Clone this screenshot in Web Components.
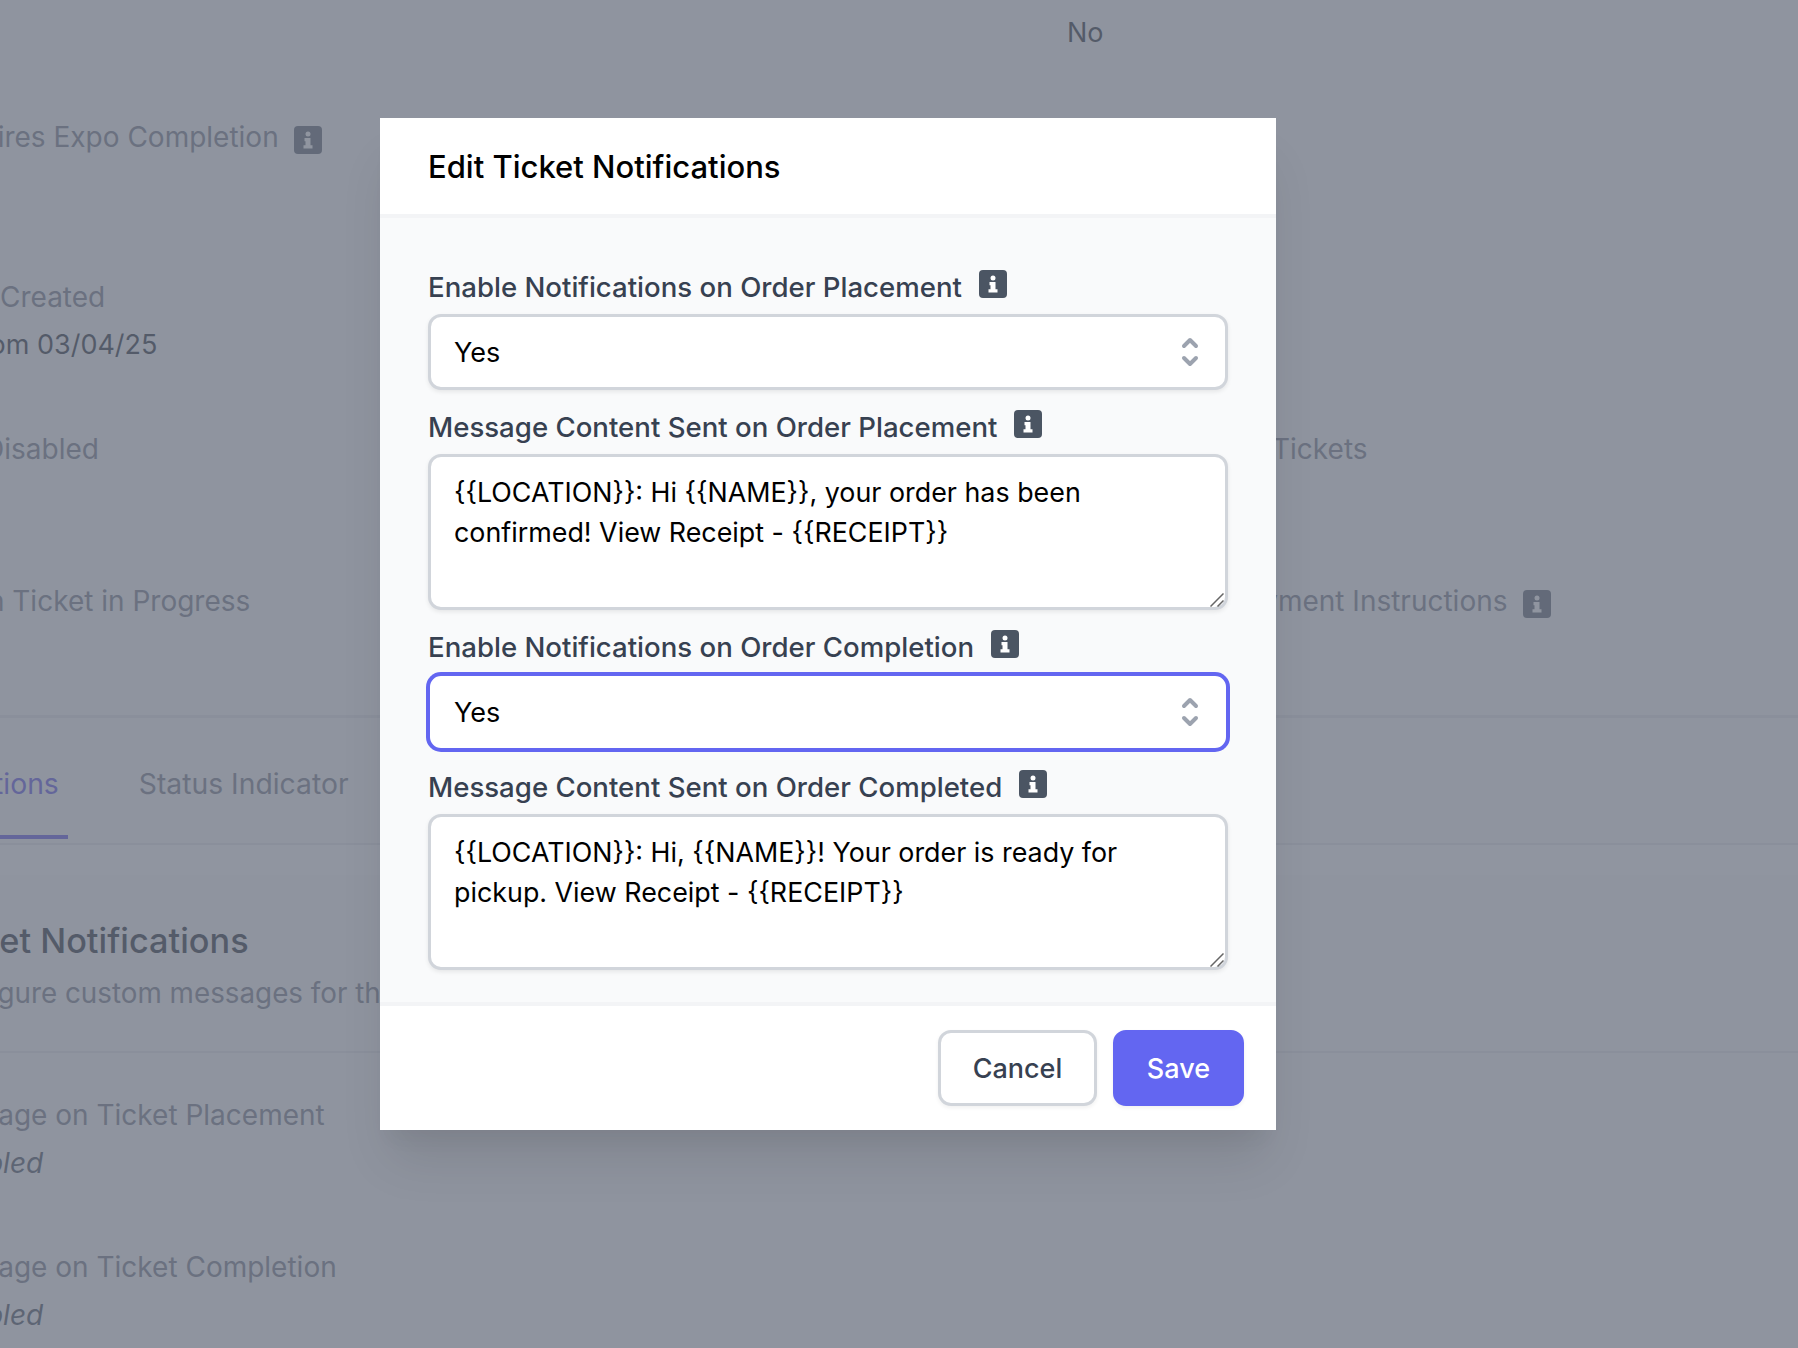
<!DOCTYPE html>
<html lang="en">
<head>
<meta charset="utf-8">
<title>Edit Ticket Notifications</title>
<style>
  html, body { margin: 0; height: 1348px; overflow: hidden; background: #f9fafb; }
  body { font-family: Inter, "Liberation Sans", sans-serif; position: relative; }
</style>
</head>
<body>

<settings-page>
  <settings-field slot="details" style="grid-column:2;" value="No"></settings-field>
  <settings-field slot="details" style="grid-column:1;grid-row:2;margin-left:-70px" label="Requires Expo Completion" info></settings-field>
  <settings-field slot="details" style="grid-column:1;grid-row:3;margin-left:-69px" label="Date Created" value="Custom 03/04/25"></settings-field>
  <settings-field slot="details" style="grid-column:1;grid-row:4;margin-left:-16px" label="Disabled"></settings-field>
  <settings-field slot="details" style="grid-column:2;grid-row:4;margin-left:205px" label="Tickets"></settings-field>
  <settings-field slot="details" style="grid-column:1;grid-row:5;margin-left:-67px" label="Open Ticket in Progress"></settings-field>
  <settings-field slot="details" style="grid-column:2;grid-row:5;margin-left:162px" label="Payment Instructions" info></settings-field>

  <settings-field slot="messages" label="Message on Ticket Placement" value="Disabled" italic></settings-field>
  <settings-field slot="messages" label="Message on Ticket Completion" value="Disabled" italic></settings-field>
</settings-page>

<modal-overlay>
  <edit-modal heading="Edit Ticket Notifications">
    <form-field label="Enable Notifications on Order Placement"><select-box>Yes</select-box></form-field>
    <form-field label="Message Content Sent on Order Placement"><text-box>{{LOCATION}}: Hi {{NAME}}, your order has been confirmed! View Receipt - {{RECEIPT}}</text-box></form-field>
    <form-field label="Enable Notifications on Order Completion"><select-box focused>Yes</select-box></form-field>
    <form-field label="Message Content Sent on Order Completed"><text-box>{{LOCATION}}: Hi, {{NAME}}! Your order is ready for pickup. View Receipt - {{RECEIPT}}</text-box></form-field>

    <action-button slot="actions">Cancel</action-button>
    <action-button slot="actions" primary>Save</action-button>
  </edit-modal>
</modal-overlay>

<script>
  // small square "i" used next to labels
  class InfoIcon extends HTMLElement {
    constructor() {
      super();
      const shadow = this.attachShadow({mode: 'open'});
      shadow.innerHTML = `
        <style>
          :host { display: inline-block; width: 28px; height: 28px; flex: none; }
          svg { display: block; }
        </style>
        <svg width="28" height="28" viewBox="0 0 28 28">
          <rect width="28" height="28" rx="4" fill="#4b5563"/>
          <circle cx="14" cy="8" r="2.5" fill="#fff"/>
          <path d="M10.5 12h6v7.2h2v3.3h-9v-3.3h2v-4h-1z" fill="#fff"/>
        </svg>
      `;
    }
  }
  customElements.define('info-icon', InfoIcon);

  // label + value pair on the page behind the modal
  class SettingsField extends HTMLElement {
    constructor() {
      super();
      const shadow = this.attachShadow({mode: 'open'});
      const label = this.getAttribute('label');
      const value = this.getAttribute('value');
      shadow.innerHTML = `
        <style>
          :host { display: block; font-size: 28px; line-height: 48px; white-space: nowrap; }
          .label { color: #6b7280; display: flex; align-items: center; gap: 15px; height: 48px; }
          .value { color: #111827; height: 48px; font-size: 27px; }
          .value.italic { font-style: italic; color: #374151; font-size: 28px; }
          info-icon { margin-top: 6px; }
        </style>
        <div class="label">${label || ''}${this.hasAttribute('info') ? '<info-icon></info-icon>' : ''}</div>
        <div class="value ${this.hasAttribute('italic') ? 'italic' : ''}">${value || ''}</div>
      `;
    }
  }
  customElements.define('settings-field', SettingsField);

  class SettingsPage extends HTMLElement {
    constructor() {
      super();
      const shadow = this.attachShadow({mode: 'open'});
      shadow.innerHTML = `
        <style>
          :host { display: block; height: 1348px; overflow: hidden; }
          .details {
            display: grid;
            grid-template-columns: 1067px 1fr;
            grid-template-rows: 96px 104px 96px 96px 96px;
            row-gap: 56px;
            margin-top: -39px;
            height: 754px;
          }
          .tabs {
            display: flex;
            gap: 62px;
            height: 126px;
            border-top: 3px solid #e5e7eb;
          }
          .tab {
            font-size: 28.3px; line-height: 40px; color: #6b7280;
            padding: 46px 9px 0;
            height: 71px;
            white-space: nowrap;
          }
          .tab.active { color: #4f46e5; border-bottom: 4px solid #4f46e5; margin-left: -119px; }
          .tab-line { height: 2px; background: #e5e7eb; margin-top: -1px; }
          .panel { background: #fff; height: 30px; }
          h2 {
            margin: 44px 0 0 -70px;
            font-size: 34.3px; line-height: 44px; font-weight: 500; color: #111827;
            white-space: nowrap;
          }
          p {
            margin: 10px 0 0 -73px;
            font-size: 27.8px; line-height: 40px; color: #6b7280;
            white-space: nowrap;
          }
          hr { border: 0; border-top: 2px solid #e5e7eb; margin: 38px 0 0; }
          .messages {
            display: flex; flex-direction: column; gap: 56px;
            margin: 38px 0 0 -73px;
          }
        </style>
        <div class="details"><slot name="details"></slot></div>
        <div class="tabs">
          <div class="tab active">Notifications</div>
          <div class="tab">Status Indicator</div>
        </div>
        <div class="tab-line"></div>
        <div class="panel"></div>
        <h2>Ticket Notifications</h2>
        <p>Configure custom messages for the customer</p>
        <hr>
        <div class="messages"><slot name="messages"></slot></div>
      `;
    }
  }
  customElements.define('settings-page', SettingsPage);

  class ModalOverlay extends HTMLElement {
    constructor() {
      super();
      const shadow = this.attachShadow({mode: 'open'});
      shadow.innerHTML = `
        <style>
          :host {
            position: absolute; top: 0; right: 0; bottom: 0; left: 0;
            background: rgba(107, 114, 128, 0.75);
            display: flex; align-items: flex-start;
            padding: 118px 0 0 380px;
          }
        </style>
        <slot></slot>
      `;
    }
  }
  customElements.define('modal-overlay', ModalOverlay);

  class EditModal extends HTMLElement {
    constructor() {
      super();
      const shadow = this.attachShadow({mode: 'open'});
      shadow.innerHTML = `
        <style>
          :host {
            display: block; width: 896px; background: #fff;
            box-shadow: 0 38px 48px -10px rgba(0,0,0,.1), 0 19px 19px -10px rgba(0,0,0,.04);
          }
          header {
            box-sizing: border-box; padding: 0 48px;
            display: flex; align-items: center;
            border-bottom: 4px solid #f3f4f6; height: 100px;
            font-size: 31px; font-weight: 450; color: #000;
          }
          .body {
            background: #f9fafb; padding: 48px 48px 32px;
            display: flex; flex-direction: column; gap: 16px;
          }
          footer {
            border-top: 4px solid #f3f4f6; padding: 24px 32px;
            display: flex; justify-content: flex-end; gap: 16px;
          }
        </style>
        <header>${this.getAttribute('heading')}</header>
        <div class="body"><slot></slot></div>
        <footer><slot name="actions"></slot></footer>
      `;
    }
  }
  customElements.define('edit-modal', EditModal);

  class FormField extends HTMLElement {
    constructor() {
      super();
      const shadow = this.attachShadow({mode: 'open'});
      shadow.innerHTML = `
        <style>
          :host { display: block; }
          label {
            display: flex; align-items: center; gap: 17px;
            box-sizing: border-box; height: 40px; padding-top: 1px; margin-bottom: 8px;
            font-size: 27.6px; font-weight: 450; color: #374151;
          }
          info-icon { margin-top: -5px; }
        </style>
        <label>${this.getAttribute('label')}<info-icon></info-icon></label>
        <slot></slot>
      `;
    }
  }
  customElements.define('form-field', FormField);

  class SelectBox extends HTMLElement {
    constructor() {
      super();
      const shadow = this.attachShadow({mode: 'open'});
      const focused = this.hasAttribute('focused');
      shadow.innerHTML = `
        <style>
          :host {
            display: flex; align-items: center; justify-content: space-between;
            box-sizing: border-box; height: 76px;
            background: #fff; border-radius: 13px;
            ${focused
              ? 'padding: 0 25px 0 24px; border: 2px solid #6366f1; box-shadow: 0 0 0 2px #6366f1;'
              : 'padding: 0 24px 0 23px; border: 3px solid #d1d5db; box-shadow: 0 2px 4px rgba(0,0,0,.08);'}
            font-size: 27px; color: #000;
          }
          svg { display: block; margin-right: 1px; }
        </style>
        <span><slot></slot></span>
        <svg width="20" height="32" viewBox="0 0 20 32" fill="none" stroke="#9ca3af" stroke-width="4" stroke-linecap="round" stroke-linejoin="round">
          <path d="M4 10l6-6 6 6M4 22l6 6 6-6"/>
        </svg>
      `;
    }
  }
  customElements.define('select-box', SelectBox);

  class TextBox extends HTMLElement {
    constructor() {
      super();
      const shadow = this.attachShadow({mode: 'open'});
      shadow.innerHTML = `
        <style>
          :host { display: block; position: relative; height: 156px; }
          textarea {
            display: block; width: 100%; height: 156px; margin: 0;
            box-sizing: border-box; padding: 15px 23px;
            background: #fff; border: 3px solid #d1d5db; border-radius: 13px;
            box-shadow: 0 2px 4px rgba(0,0,0,.08);
            font: 26.85px/40px Inter, "Liberation Sans", sans-serif; color: #000;
            outline: none; resize: none;
          }
          /* resize grip */
          svg { position: absolute; right: 4px; bottom: 3px; display: block; }
        </style>
        <textarea>${this.textContent}</textarea>
        <svg width="14" height="14" viewBox="0 0 14 14" fill="none" stroke="#666" stroke-width="1.5">
          <path d="M.5 13.5l13-13M7.5 13.5l6-6"/>
        </svg>
      `;
    }
  }
  customElements.define('text-box', TextBox);

  class ActionButton extends HTMLElement {
    constructor() {
      super();
      const shadow = this.attachShadow({mode: 'open'});
      const primary = this.hasAttribute('primary');
      shadow.innerHTML = `
        <style>
          :host {
            display: flex; align-items: center; justify-content: center;
            box-sizing: border-box; height: 76px; padding: 0 ${primary ? '31px' : '31.5px'};
            border-radius: 13px; font-size: 27px; font-weight: 450;
            border: 3px solid ${primary ? '#6366f1' : '#d1d5db'};
            background: ${primary ? '#6366f1' : '#fff'};
            color: ${primary ? '#fff' : '#374151'};
            box-shadow: 0 2px 4px rgba(0,0,0,.06);
          }
        </style>
        <slot></slot>
      `;
    }
  }
  customElements.define('action-button', ActionButton);
</script>
</body>
</html>
